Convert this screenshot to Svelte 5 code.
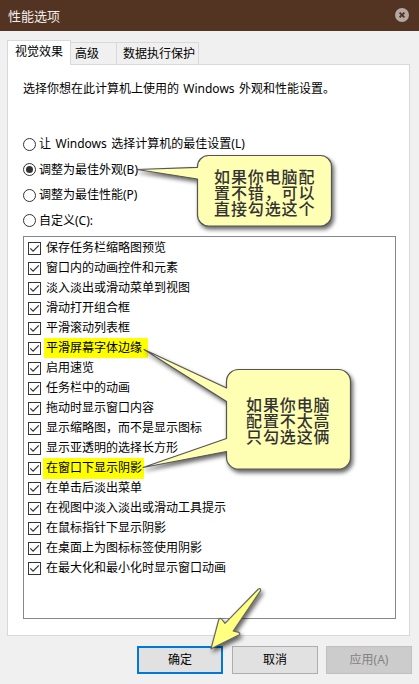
<script lang="ts">
	const tabs = ['视觉效果', '高级', '数据执行保护'];

	const modes = [
		'让 Windows 选择计算机的最佳设置(L)',
		'调整为最佳外观(B)',
		'调整为最佳性能(P)',
		'自定义(C):'
	];

	const effects = [
		{ label: '保存任务栏缩略图预览' },
		{ label: '窗口内的动画控件和元素' },
		{ label: '淡入淡出或滑动菜单到视图' },
		{ label: '滑动打开组合框' },
		{ label: '平滑滚动列表框' },
		{ label: '平滑屏幕字体边缘', mark: 'font' },
		{ label: '启用速览' },
		{ label: '任务栏中的动画' },
		{ label: '拖动时显示窗口内容' },
		{ label: '显示缩略图，而不是显示图标' },
		{ label: '显示亚透明的选择长方形' },
		{ label: '在窗口下显示阴影', mark: 'shadow' },
		{ label: '在单击后淡出菜单' },
		{ label: '在视图中淡入淡出或滑动工具提示' },
		{ label: '在鼠标指针下显示阴影' },
		{ label: '在桌面上为图标标签使用阴影' },
		{ label: '在最大化和最小化时显示窗口动画' }
	];

	let activeTab = $state(0);
	let mode = $state(1);
	let checked = $state(effects.map(() => true));
</script>

<div class="window">
	<header class="titlebar">
		<span>性能选项</span>
		<svg class="close" width="14" height="14" viewBox="0 0 14 14">
			<circle cx="7" cy="7" r="7" fill="#b3a8a2" />
			<path d="M4.6 4.6l4.8 4.8M9.4 4.6L4.6 9.4" stroke="#533322" stroke-width="1.9" />
		</svg>
	</header>

	<main class="body">
		<div class="tabs">
			{#each tabs as tab, i}
				<button class="tab" class:active={i === activeTab} onclick={() => (activeTab = i)}>{tab}</button>
			{/each}
		</div>

		<section class="panel">
			<p class="intro">选择你想在此计算机上使用的 Windows 外观和性能设置。</p>

			<div class="modes">
				{#each modes as label, i}
					<button class="mode" onclick={() => (mode = i)}>
						<span class="radio" class:on={i === mode}></span>
						<span>{label}</span>
					</button>
				{/each}
			</div>

			<div class="effects">
				{#each effects as effect, i}
					<button class="effect" onclick={() => (checked[i] = !checked[i])}>
						<span class="box">
							{#if checked[i]}
								<svg width="11" height="11" viewBox="0 0 11 11">
									<path d="M1.3 5.4L4.1 8.2L9.8 2.3" fill="none" stroke="#333" stroke-width="1.2" />
								</svg>
							{/if}
						</span>
						<span class="label {effect.mark ?? ''}">{effect.label}</span>
					</button>
				{/each}
			</div>
		</section>
	</main>

	<footer class="actions">
		<button class="action primary">确定</button>
		<button class="action">取消</button>
		<button class="action" disabled>应用(A)</button>
	</footer>

	<!-- callouts and arrow drawn over the dialog -->
	<svg class="notes" width="419" height="684" viewBox="0 0 419 684">
		<path
			class="bubble"
			d="M208.5 155.5H320.5a11 11 0 0 1 11 11V215a11 11 0 0 1-11 11H208.5a11 11 0 0 1-11-11V179L137 169.5L197.5 167.3V166.5a11 11 0 0 1 11-11Z"
		/>
		<path
			class="bubble"
			d="M238.5 369.5H338.5a12 12 0 0 1 12 12V457.2a12 12 0 0 1-12 12H238.5a12 12 0 0 1-12-12V451.5L143 467.5L226.5 438.5V401.5L144 349.5L226.5 388V381.5a12 12 0 0 1 12-12Z"
		/>
		<path
			class="bubble arrow"
			d="M211 648.8L218.8 619.5Q219.8 617.6 221.6 619L225 623.4L258.4 589Q260.8 587.8 260.6 590.6L233.2 631L238.8 632.4Q240.8 633.6 238.8 635Z"
		/>
	</svg>
	<div class="note first">如果你电脑配<br />置不错，可以<br />直接勾选这个</div>
	<div class="note second">如果你电脑<br />配置不太高<br />只勾选这俩</div>
</div>

<style>
	:global(body) {
		margin: 0;
		background: #f0f0f0;
	}

	.window {
		position: relative;
		display: flex;
		flex-direction: column;
		width: 419px;
		height: 684px;
		overflow: hidden;
		background: #f0f0f0;
		color: #000;
		font: 12px/20px 'Noto Sans', 'Noto Sans CJK SC', sans-serif;
	}

	button {
		margin: 0;
		padding: 0;
		border: 0;
		border-radius: 0;
		background: none;
		color: inherit;
		font: inherit;
		text-align: left;
		white-space: nowrap;
	}

	.titlebar {
		display: flex;
		align-items: center;
		justify-content: space-between;
		box-sizing: border-box;
		height: 31px;
		padding: 0 8px;
		background: #533322;
		color: #f2eeec;
		font-size: 13px;
	}

	.close {
		margin-top: -1px;
		margin-right: 2px;
	}

	.body {
		padding: 9px 8px 0 7px;
	}

	.tabs {
		display: flex;
		align-items: flex-end;
		height: 24px;
	}

	.tab {
		box-sizing: border-box;
		width: 46px;
		height: 22px;
		padding-left: 4px;
		border: 1px solid #d9d9d9;
		border-left: 0;
		border-bottom: 0;
	}

	.tab:last-child {
		width: 82px;
		padding-left: 6px;
	}

	.tab.active {
		position: relative;
		width: 64px;
		height: 25px;
		margin-bottom: -1px;
		padding: 0 0 2px 7px;
		border-left: 1px solid #d9d9d9;
		background: #fff;
	}

	.panel {
		box-sizing: border-box;
		width: 403px;
		height: 572px;
		padding: 14px 13px 0 15px;
		border: 1px solid #d9d9d9;
		background: #fff;
	}

	.intro {
		margin: 0;
		white-space: nowrap;
		word-spacing: 1.2px;
	}

	.modes {
		display: flex;
		flex-direction: column;
		margin-top: 32.5px;
	}

	.mode {
		display: flex;
		align-items: center;
		height: 25.5px;
		gap: 3px;
		word-spacing: 1.4px;
	}

	.radio {
		display: flex;
		align-items: center;
		justify-content: center;
		box-sizing: border-box;
		width: 13px;
		height: 13px;
		border: 1px solid #333;
		border-radius: 50%;
	}

	.radio.on::after {
		content: '';
		width: 7px;
		height: 7px;
		border-radius: 50%;
		background: #333;
	}

	.effects {
		box-sizing: border-box;
		width: 373px;
		height: 383px;
		margin-top: 2.5px;
		padding: 1px 0 0 4px;
		border: 1px solid #828790;
	}

	.effect {
		display: flex;
		align-items: center;
		height: 20px;
		gap: 5px;
	}

	.box {
		display: flex;
		box-sizing: border-box;
		width: 13px;
		height: 13px;
		border: 1px solid #333;
	}

	.label.font {
		margin-left: -2px;
		padding: 0 6px 0 2px;
		background: #ff0;
	}

	.label.shadow {
		margin-left: -3px;
		padding: 0 2px 1px 3px;
		background: #ff0;
	}

	.actions {
		display: flex;
		justify-content: flex-end;
		gap: 8px;
		padding: 10px 7px 0 0;
	}

	.action {
		box-sizing: border-box;
		width: 86px;
		height: 28px;
		border: 1px solid #adadad;
		background: #e1e1e1;
		text-align: center;
	}

	.action.primary {
		margin-right: 1px;
		border: 2px solid #0078d7;
	}

	.action:disabled {
		border-color: #bfbfbf;
		background: #ccc;
		color: #838383;
	}

	.notes {
		position: absolute;
		top: 0;
		left: 0;
		pointer-events: none;
	}

	.bubble {
		fill: #ffffb4;
		stroke: #555;
		stroke-width: 1.2;
		stroke-linejoin: round;
		filter: drop-shadow(2px 3px 2px rgba(0, 0, 0, 0.6));
	}

	.arrow {
		fill: #ffff80;
		stroke: #666;
	}

	.note {
		position: absolute;
		color: #333;
		font-size: 16px;
		font-weight: 500;
		line-height: 16px;
		letter-spacing: 0.9px;
		white-space: nowrap;
		pointer-events: none;
	}

	.first {
		top: 169px;
		left: 214px;
	}

	.second {
		top: 397px;
		left: 246px;
	}
</style>
